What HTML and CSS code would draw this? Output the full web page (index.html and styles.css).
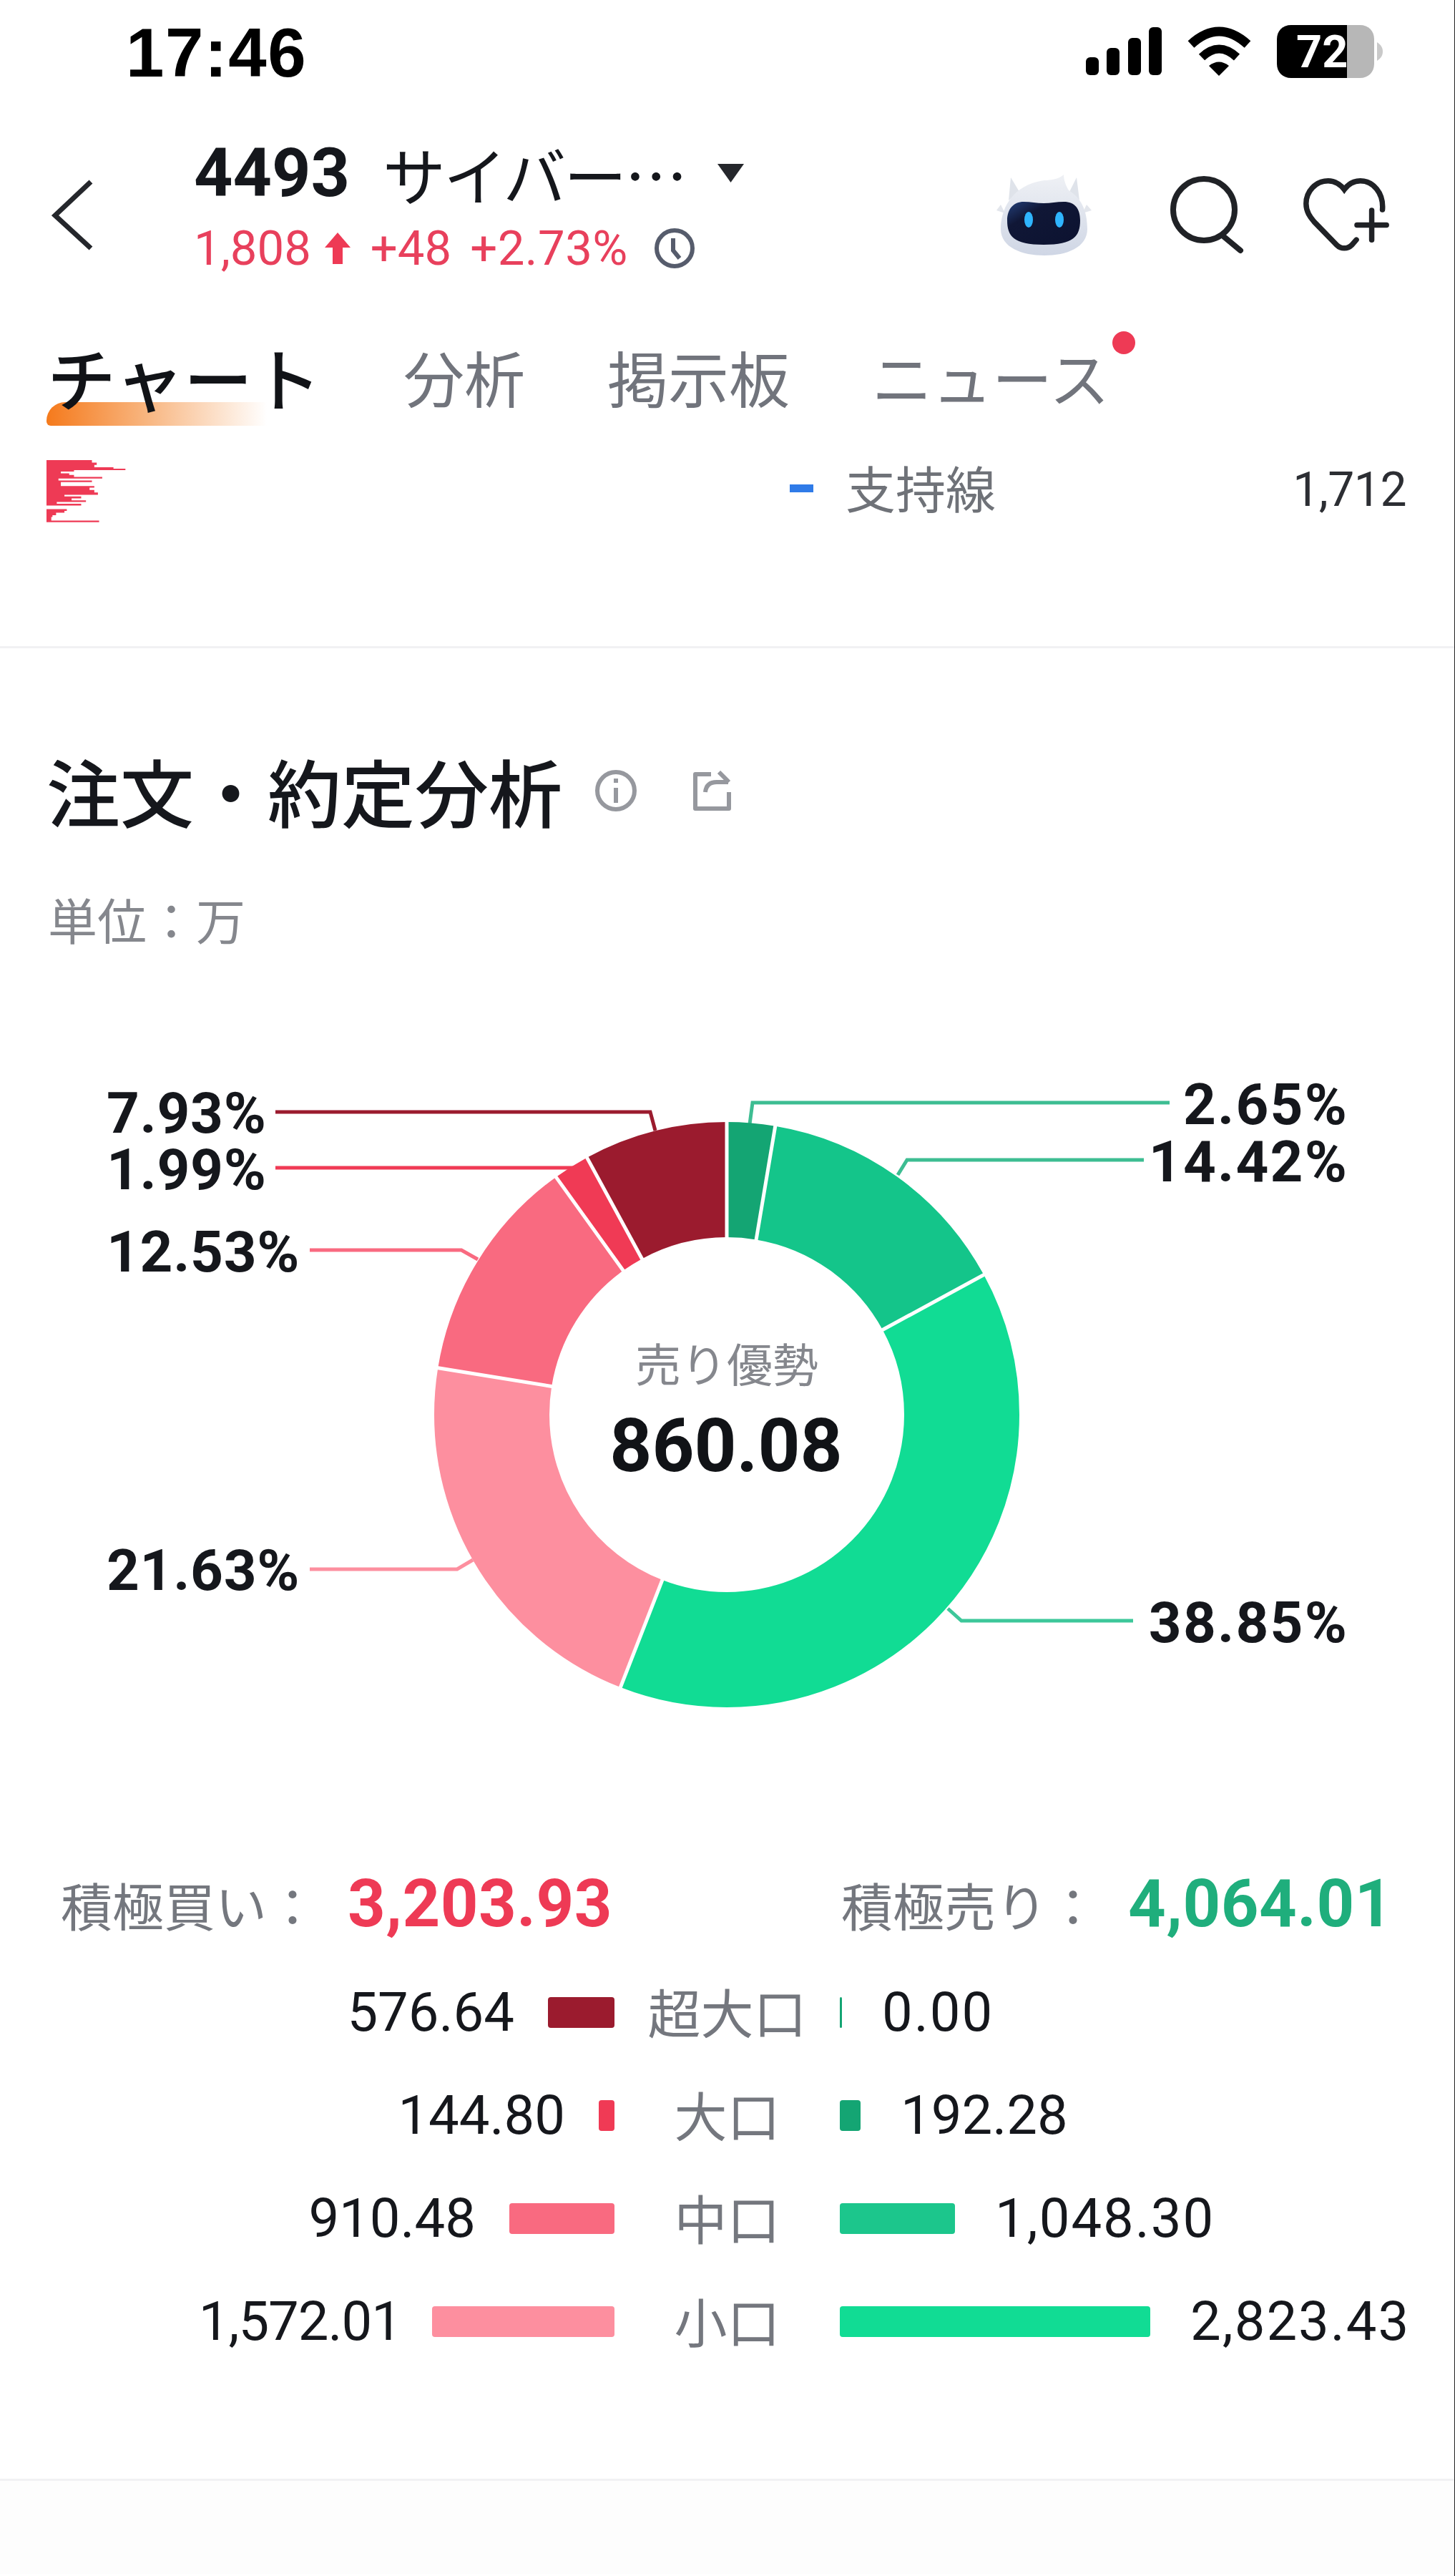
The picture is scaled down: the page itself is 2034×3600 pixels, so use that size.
FILE: index.html
```html
<!DOCTYPE html>
<html lang="ja">

<head>
  <meta charset="UTF-8">
  <meta name="viewport" content="width=device-width, initial-scale=1.0">
  <title>4493 注文・約定分析</title>
  <link rel="stylesheet" href="styles.css">
</head>

<body>
  <div class="app">
    <div class="status">
      <span class="time">17:46</span>
      <div class="status-icons">
        <svg width="106" height="68" viewBox="0 0 106 68">
          <rect x="0" y="42" width="18" height="25" rx="6" />
          <rect x="29" y="29" width="18" height="38" rx="6" />
          <rect x="59" y="15" width="18" height="52" rx="6" />
          <rect x="88" y="0" width="18" height="67" rx="6" />
        </svg>
        <svg width="91" height="70" viewBox="0 0 91 70">
          <path d="M6 25Q45 -11 85 25" class="wifi-arc" stroke-width="13" />
          <path d="M21 43Q45 20 70 43" class="wifi-arc" stroke-width="12" />
          <path d="M31 55Q45 44 59 55L45 69Z" />
        </svg>
        <svg width="148" height="74" viewBox="0 0 148 74">
          <path d="M98 0H116C128 0 136 8 136 20V54C136 66 128 74 116 74H98Z" fill="#b7b7b7" />
          <path d="M98 0H20C8 0 0 8 0 20V54C0 66 8 74 20 74H98Z" />
          <path d="M140 24C146 28 148 32 148 37C148 42 146 46 140 50Z" fill="#c9c9c9" />
          <text x="27" y="59" class="batt-text">72</text>
        </svg>
      </div>
    </div>

    <div class="head">
      <svg class="back" width="59" height="99" viewBox="0 0 59 99">
        <path d="M55 3L5 50L55 96" />
      </svg>
      <div class="info">
        <div class="title">
          <span class="code">4493</span>
          <span class="name">サイバー…</span>
          <svg class="caret" width="37" height="26" viewBox="0 0 37 26"><path d="M0 0H37L18.500 26Z" /></svg>
        </div>
        <div class="quote">
          <span>1,808</span>
          <svg class="up" width="36" height="44" viewBox="0 0 36 44"><path d="M18 0L36 21H25V44H11V21H0Z" /></svg>
          <span class="chg">+48</span>
          <span class="chg">+2.73%</span>
          <svg class="clock" width="58" height="60" viewBox="0 0 58 60">
            <circle cx="29" cy="30" r="25" />
            <path d="M27 16V33L36 44" />
          </svg>
        </div>
      </div>
      <div class="tools">
        <svg class="robot" width="133" height="113" viewBox="0 0 133 113">
          <defs>
            <linearGradient id="shell" x1="0" y1="0" x2="0" y2="1">
              <stop offset="0" stop-color="#eff1f5" />
              <stop offset="1" stop-color="#cfd6e5" />
            </linearGradient>
            <linearGradient id="visor" x1="0" y1="0" x2="1" y2="1">
              <stop offset="0" stop-color="#24407a" />
              <stop offset=".3" stop-color="#101736" />
              <stop offset="1" stop-color="#0c1230" />
            </linearGradient>
          </defs>
          <path d="M17 36L20 4L32 24Z M116 36L112 4L102 24Z" fill="#dfe3ea" />
          <path d="M6 42L0 50L12 54Z M126 42L133 50L120 54Z" fill="#e3e6ec" />
          <path d="M67 8C76 8 88 6 94 0C94 6 96 14 101 22C118 32 127 50 127 76C127 102 98 113 67 113C36 113 6 102 6 76C6 48 22 14 67 8Z" fill="url(#shell)" />
          <path d="M66 40C76 40 84 38 94 38C110 38 117 48 117 64C117 86 108 98 66 98C24 98 15 86 15 64C15 48 24 38 38 38C48 38 56 40 66 40Z" fill="url(#visor)" />
          <ellipse cx="45" cy="63" rx="6" ry="11" fill="#2fb5ff" />
          <ellipse cx="88" cy="63" rx="6" ry="11" fill="#2fb5ff" />
        </svg>
        <svg class="line-ico" width="112" height="114" viewBox="0 0 112 114">
          <circle cx="53" cy="50" r="43" />
          <path d="M80 87L104 107" />
        </svg>
        <svg class="line-ico" width="120" height="103" viewBox="0 0 128 110">
          <path d="M118 47C120 22 104 4 85 4C74 4 66 10 61 17C56 10 47 4 37 4C18 4 4 20 4 38C4 50 10 58 16 65L50 100C56 106 66 106 72 100L79 92" />
          <path d="M80 70H124M102 48V92" />
        </svg>
      </div>
    </div>

    <div class="tabs">
      <div class="tab active">チャート</div>
      <div class="tab">分析</div>
      <div class="tab">掲示板</div>
      <div class="tab news">ニュース</div>
    </div>

    <div class="level">
      <svg class="depth" width="112" height="87" viewBox="75 70 335 260">
        <path d="M75 70H265V80H75ZM75 80H285V90H75ZM75 90H275V100H75ZM75 100H355V106H75ZM75 106H405V112H75ZM75 112H190V118H75ZM75 118H135V125H75ZM75 125H170V132H75ZM75 132H190V140H75ZM75 140H308V147H75ZM75 147H125V155H75ZM75 155H265V162H75ZM75 162H135V178H75ZM75 178H275V185H75ZM75 185H255V195H75ZM75 195H275V205H75ZM75 205H290V215H75ZM75 215H150V222H75ZM75 222H220V230H75ZM75 230H180V238H75ZM75 238H240V245H75ZM75 245H118V252H75ZM75 252H220V260H75ZM75 275H160V282H75ZM75 282H150V290H75ZM75 290H115V300H75ZM75 300H100V308H75ZM75 308H95V323H75ZM75 323H295V329H75Z" />
      </svg>
      <span class="sup-mark"></span>
      <span class="sup-label">支持線</span>
      <span class="sup-value">1,712</span>
    </div>

    <div class="section">
      <div class="sec-title">
        <h2>注文・約定分析</h2>
        <svg class="gray-ico" width="60" height="58" viewBox="0 0 60 58">
          <circle cx="30" cy="29" r="26" />
          <path d="M30 25V46M30 12V18" />
        </svg>
        <svg class="gray-ico" width="54" height="56" viewBox="0 0 54 56">
          <path d="M25 5H3V53H50V30" />
          <path d="M17 30C18 20 24 16 33 16H49M36 2L50 16" />
        </svg>
      </div>
      <div class="unit">単位：万</div>

      <svg class="donut" width="2034" height="960" viewBox="0 1480 2034 960">
        <g class="legs">
          <path d="M385 1554H909L916 1580" stroke="#9b1b2e" />
          <path d="M385 1632H802L811 1640" stroke="#f03a55" />
          <path d="M433 1747H645L668 1760" stroke="#f96a80" />
          <path d="M433 2193H639L661 2180" stroke="#fd8f9f" />
          <path d="M1048 1571L1052 1541H1635" stroke="#3dbd92" />
          <path d="M1255 1642L1268 1621H1599" stroke="#3dbd92" />
          <path d="M1325 2248L1344 2265H1584" stroke="#3dc79a" />
        </g>
        <g class="ring" transform="translate(1016 1977) rotate(-90)">
          <circle r="328.500" pathLength="100" stroke="#14a573" stroke-dasharray="2.65 100" />
          <circle r="328.500" pathLength="100" stroke="#14c58a" stroke-dasharray="14.42 100" stroke-dashoffset="-2.65" />
          <circle r="328.500" pathLength="100" stroke="#11dc94" stroke-dasharray="38.85 100" stroke-dashoffset="-17.07" />
          <circle r="328.500" pathLength="100" stroke="#fd8f9f" stroke-dasharray="21.63 100" stroke-dashoffset="-55.92" />
          <circle r="328.500" pathLength="100" stroke="#f96a80" stroke-dasharray="12.53 100" stroke-dashoffset="-77.55" />
          <circle r="328.500" pathLength="100" stroke="#f03a55" stroke-dasharray="1.99 100" stroke-dashoffset="-90.08" />
          <circle r="328.500" pathLength="100" stroke="#9b1b2e" stroke-dasharray="7.93 100" stroke-dashoffset="-92.07" />
        </g>
        <g class="cuts" transform="translate(1016 1977)">
          <path d="M0 -240V-418" />
          <path d="M0 -240V-418" transform="rotate(9.54)" />
          <path d="M0 -240V-418" transform="rotate(61.45)" />
          <path d="M0 -240V-418" transform="rotate(201.31)" />
          <path d="M0 -240V-418" transform="rotate(279.18)" />
          <path d="M0 -240V-418" transform="rotate(324.29)" />
          <path d="M0 -240V-418" transform="rotate(331.45)" />
        </g>
        <text x="149" y="1583" class="pct">7.93%</text>
        <text x="149" y="1662" class="pct">1.99%</text>
        <text x="149" y="1777" class="pct">12.53%</text>
        <text x="149" y="2222" class="pct">21.63%</text>
        <text x="1885" y="1571" class="pct end">2.65%</text>
        <text x="1885" y="1651" class="pct end">14.42%</text>
        <text x="1885" y="2295" class="pct end">38.85%</text>
        <text x="1016" y="1931" class="mid-label">売り優勢</text>
        <text x="1015" y="2056" class="mid-value">860.08</text>
      </svg>

      <div class="totals">
        <div class="total"><span class="total-label">積極買い：</span><span class="total-num up-c">3,203.93</span></div>
        <div class="total"><span class="total-label">積極売り：</span><span class="total-num down-c">4,064.01</span></div>
      </div>

      <div class="rows">
        <div class="row">
          <div class="side left"><span>576.64</span><i class="bar c1" style="width: 93px"></i></div>
          <div class="size">超大口</div>
          <div class="side right"><i class="bar c5" style="width: 3px"></i><span class="wide">0.00</span></div>
        </div>
        <div class="row">
          <div class="side left"><span>144.80</span><i class="bar c2" style="width: 22px"></i></div>
          <div class="size">大口</div>
          <div class="side right"><i class="bar c5" style="width: 29px"></i><span>192.28</span></div>
        </div>
        <div class="row">
          <div class="side left"><span>910.48</span><i class="bar c3" style="width: 147px"></i></div>
          <div class="size">中口</div>
          <div class="side right"><i class="bar c6" style="width: 161px"></i><span class="wide">1,048.30</span></div>
        </div>
        <div class="row">
          <div class="side left"><span class="tight">1,572.01</span><i class="bar c4" style="width: 255px"></i></div>
          <div class="size">小口</div>
          <div class="side right"><i class="bar c7" style="width: 434px"></i><span class="wide">2,823.43</span></div>
        </div>
      </div>
    </div>
    <div class="foot"></div>
  </div>
</body>

</html>
```

FILE: styles.css
```css
* {
  box-sizing: border-box;
}

html,
body {
  height: 100%;
}

body {
  margin: 0;
  background: #fff;
}

.app {
  width: 2034px;
  height: 3600px;
  overflow: hidden;
  background: #fff;
  border-right: 1px solid #222;
  font-family: Roboto, "Noto Sans CJK JP", sans-serif;
  color: #15171c;
}

/* status bar */
.status {
  height: 144px;
  display: flex;
  align-items: center;
  justify-content: space-between;
  padding: 0 100px 0 176px;
}

.time {
  padding-top: 4px;
  font-family: "Liberation Sans", sans-serif;
  font-weight: 700;
  font-size: 96px;
  letter-spacing: 1.500px;
  color: #000;
}

.status-icons {
  display: flex;
  align-items: center;
  gap: 35px;
}

.wifi-arc {
  fill: none;
  stroke: #000;
}

.batt-text {
  font-family: Roboto, sans-serif;
  font-weight: 700;
  font-size: 63px;
  fill: #fff;
}

/* stock header */
.head {
  height: 256px;
  padding: 44px 91px 0 72px;
  display: flex;
  align-items: center;
}

.back {
  margin-top: 12px;
  fill: none;
  stroke: #25272c;
  stroke-width: 7;
}

.info {
  margin-left: 140px;
}

.title {
  height: 106px;
  display: flex;
  align-items: center;
}

.code {
  font-weight: 700;
  font-size: 95px;
}

.name {
  margin-left: 46px;
  font-family: "Noto Sans CJK JP", sans-serif;
  font-weight: 400;
  font-size: 88px;
  letter-spacing: -3px;
}

.caret {
  margin-left: 45px;
  margin-top: 2px;
  fill: #25272c;
}

.quote {
  height: 106px;
  display: flex;
  align-items: center;
  font-size: 67px;
  color: #e8405c;
}

.up {
  margin-left: 19px;
  fill: #ee3a55;
}

.chg {
  margin-left: 28px;
}

.chg + .chg {
  margin-left: 26px;
  letter-spacing: .5px;
}

.clock {
  margin-left: 36px;
  fill: none;
  stroke: #565c6c;
  stroke-width: 6;
}

.tools {
  margin-left: auto;
  margin-top: 12px;
  display: flex;
  align-items: center;
}

.robot {
  margin-right: 104px;
}

.line-ico {
  fill: none;
  stroke: #202226;
  stroke-width: 8;
  stroke-linecap: round;
}

.line-ico + .line-ico {
  margin-left: 80px;
}

/* tabs */
.tabs {
  height: 220px;
  padding: 0 0 0 66px;
  display: flex;
  align-items: flex-start;
  font-family: "Noto Sans CJK JP", sans-serif;
}

.tab {
  margin-top: 66px;
  margin-left: 115px;
  font-size: 85px;
  line-height: 120px;
  font-weight: 400;
  color: #71747c;
  position: relative;
}

.tab.active {
  margin-left: 0;
  font-size: 96px;
  font-weight: 500;
  color: #111317;
  z-index: 0;
}

.tab.active::before {
  content: "";
  position: absolute;
  left: -1px;
  top: 96px;
  width: 308px;
  height: 33px;
  border-radius: 26px 0 0 6px;
  background: linear-gradient(90deg, #f57a1c 0%, #f8b57f 45%, #fff 100%);
  z-index: -1;
}

.tab.news {
  font-size: 84px;
}

.tab.news::after {
  content: "";
  position: absolute;
  left: 336px;
  top: -3px;
  width: 32px;
  height: 32px;
  border-radius: 50%;
  background: #ee3a55;
}

/* support line row */
.level {
  height: 286px;
  padding: 23px 67px 0 65px;
  display: flex;
  align-items: flex-start;
  border-bottom: 3px solid #f1f1f3;
}

.depth {
  fill: #ee3a55;
}

.sup-mark {
  width: 33px;
  height: 11px;
  margin-left: 927px;
  margin-top: 34px;
  background: #2f7be8;
}

.sup-label {
  margin-left: 45px;
  margin-top: -4px;
  font-family: "Noto Sans CJK JP", sans-serif;
  font-size: 70px;
  line-height: 84px;
  color: #6f7278;
}

.sup-value {
  margin-left: auto;
  font-size: 66px;
  letter-spacing: -.500px;
  line-height: 84px;
  color: #2c2e33;
}

/* order flow section */
.section {
  padding-top: 129px;
}

.sec-title {
  height: 140px;
  padding-left: 65px;
  display: flex;
  align-items: center;
}

h2 {
  margin: 0;
  font-family: "Noto Sans CJK JP", sans-serif;
  font-weight: 500;
  font-size: 103px;
  line-height: 140px;
}

.gray-ico {
  fill: none;
  stroke: #96989e;
  stroke-width: 6;
  stroke-linejoin: round;
}

h2 + .gray-ico {
  margin-left: 45px;
}

.gray-ico + .gray-ico {
  margin-left: 78px;
}

.unit {
  margin-top: 64px;
  padding-left: 67px;
  font-family: "Noto Sans CJK JP", sans-serif;
  font-size: 69px;
  line-height: 90px;
  color: #85878d;
}

.donut {
  display: block;
  margin-top: 151px;
}

.legs path {
  fill: none;
  stroke-width: 5;
}

.ring circle {
  fill: none;
  stroke-width: 161;
}

.cuts path {
  fill: none;
  stroke: #fff;
  stroke-width: 5;
}

.pct {
  font-family: Roboto, sans-serif;
  font-weight: 700;
  font-size: 80px;
  letter-spacing: .7px;
  fill: #15171c;
}

.pct.end {
  text-anchor: end;
  letter-spacing: 2.200px;
}

.mid-label {
  font-family: "Noto Sans CJK JP", sans-serif;
  font-size: 64px;
  text-anchor: middle;
  fill: #85878d;
}

.mid-value {
  font-family: Roboto, sans-serif;
  font-weight: 700;
  font-size: 103px;
  text-anchor: middle;
  fill: #111317;
}

.totals {
  margin-top: 170px;
  height: 100px;
  padding: 0 86px 0 85px;
  display: flex;
  justify-content: space-between;
  align-items: center;
}

.total {
  display: flex;
  align-items: center;
}

.total-label {
  font-family: "Noto Sans CJK JP", sans-serif;
  font-size: 72px;
  color: #74777e;
}

.total-num {
  margin-left: 41px;
  font-weight: 700;
  font-size: 92px;
  letter-spacing: .500px;
}

.up-c {
  color: #ee3a55;
}

.down-c {
  color: #1fae7c;
}

.rows {
  margin-top: 30px;
}

.row {
  height: 144px;
  display: grid;
  grid-template-columns: 859px 315px 1fr;
  align-items: center;
}

.side {
  display: flex;
  align-items: center;
  font-size: 76px;
  color: #15171c;
}

.side.left {
  justify-content: flex-end;
  gap: 47px;
}

.side.right {
  gap: 56px;
}

.wide {
  letter-spacing: 2px;
}

.tight {
  letter-spacing: -1px;
  margin-right: -4px;
}

.bar {
  height: 43px;
  border-radius: 4px;
  display: block;
}

.c1 {
  background: #9b1b2e;
}

.c2 {
  background: #f03a55;
}

.c3 {
  background: #f96a80;
}

.c4 {
  background: #fd8f9f;
}

.c5 {
  background: #14a573;
}

.c6 {
  background: #1cc68c;
}

.c7 {
  background: #11dc94;
}

.size {
  margin-top: -6px;
  font-family: "Noto Sans CJK JP", sans-serif;
  font-size: 74px;
  color: #74777e;
  text-align: center;
}

.foot {
  margin-top: 148px;
  height: 133px;
  border-top: 3px solid #f1f1f3;
  background: #fdfdfd;
}
```
